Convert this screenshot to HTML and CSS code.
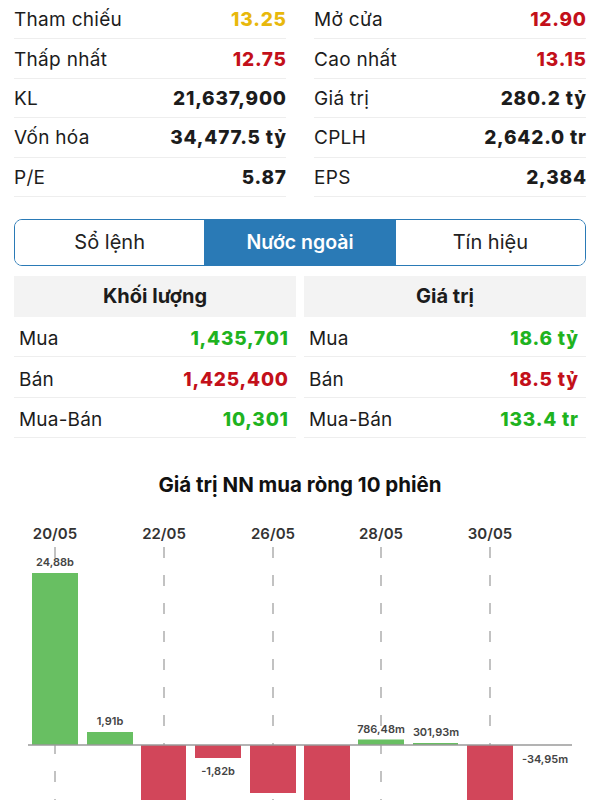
FILE: index.html
```html
<!DOCTYPE html>
<html lang="vi">
<head>
    <meta charset="UTF-8">
    <meta name="viewport" content="width=device-width, initial-scale=1.0">
    <title>Nước ngoài</title>
    <link rel="stylesheet" href="styles.css">
</head>
<body>

<div class="stats">
    <div class="stat-row"><span>Tham chiếu</span><b class="ref">13.25</b></div>
    <div class="stat-row"><span>Mở cửa</span><b class="down">12.90</b></div>
    <div class="stat-row"><span>Thấp nhất</span><b class="down">12.75</b></div>
    <div class="stat-row"><span>Cao nhất</span><b class="down">13.15</b></div>
    <div class="stat-row"><span>KL</span><b>21,637,900</b></div>
    <div class="stat-row"><span>Giá trị</span><b>280.2 tỷ</b></div>
    <div class="stat-row"><span>Vốn hóa</span><b>34,477.5 tỷ</b></div>
    <div class="stat-row"><span>CPLH</span><b>2,642.0 tr</b></div>
    <div class="stat-row"><span>P/E</span><b>5.87</b></div>
    <div class="stat-row"><span>EPS</span><b>2,384</b></div>
</div>

<div class="tabs">
    <button class="tab">Sổ lệnh</button>
    <button class="tab active">Nước ngoài</button>
    <button class="tab">Tín hiệu</button>
</div>

<div class="foreign">
    <div class="ftable">
        <div class="fhead">Khối lượng</div>
        <div class="frow"><span>Mua</span><b class="up">1,435,701</b></div>
        <div class="frow"><span>Bán</span><b class="down">1,425,400</b></div>
        <div class="frow"><span>Mua-Bán</span><b class="up">10,301</b></div>
    </div>
    <div class="ftable">
        <div class="fhead">Giá trị</div>
        <div class="frow"><span>Mua</span><b class="up">18.6 tỷ</b></div>
        <div class="frow"><span>Bán</span><b class="down">18.5 tỷ</b></div>
        <div class="frow"><span>Mua-Bán</span><b class="up">133.4 tr</b></div>
    </div>
</div>

<h3 class="chart-title">Giá trị NN mua ròng 10 phiên</h3>

<svg class="chart" width="600" height="300" viewBox="0 0 600 300">
    <!-- date labels -->
    <g class="date">
        <text x="55" y="38">20/05</text>
        <text x="164" y="38">22/05</text>
        <text x="273" y="38">26/05</text>
        <text x="381" y="38">28/05</text>
        <text x="490" y="38">30/05</text>
    </g>
    <!-- grid lines -->
    <g class="grid">
        <line x1="55" y1="46" x2="55" y2="300"/>
        <line x1="164" y1="46" x2="164" y2="300"/>
        <line x1="273" y1="46" x2="273" y2="300"/>
        <line x1="381" y1="46" x2="381" y2="300"/>
        <line x1="490" y1="46" x2="490" y2="300"/>
    </g>
    <!-- bars -->
    <rect class="bar-up" x="32" y="72" width="46" height="172"/>
    <rect class="bar-up" x="87" y="231" width="46" height="13"/>
    <rect class="bar-down" x="141" y="244" width="45" height="80"/>
    <rect class="bar-down" x="195" y="244" width="46" height="13"/>
    <rect class="bar-down" x="250" y="244" width="46" height="48"/>
    <rect class="bar-down" x="304" y="244" width="46" height="80"/>
    <rect class="bar-up" x="358" y="238.5" width="46" height="5.5"/>
    <rect class="bar-up" x="413" y="242" width="45" height="2"/>
    <rect class="bar-down" x="467" y="244" width="46" height="80"/>
    <line class="axis" x1="28" y1="244" x2="572" y2="244"/>
    <!-- values -->
    <g class="val">
        <text x="55" y="65">24,88b</text>
        <text x="110" y="224">1,91b</text>
        <text x="218" y="274">-1,82b</text>
        <text x="381" y="232">786,48m</text>
        <text x="436" y="235">301,93m</text>
        <text x="545" y="262">-34,95m</text>
    </g>
</svg>

</body>
</html>
```

FILE: styles.css
```css
body {
    font-family: Inter, "Noto Sans", sans-serif;
    margin: 0;
    padding: 0 14px;
    color: #1c1c1c;
    background: #fff;
}
b {
    font-weight: 800;
    letter-spacing: 0.8px;
    margin-right: -0.8px;
}
.up {
    color: #1fb31f;
}
.down {
    color: #c3101a;
}
.ref {
    color: #e8b80c;
}
.stats {
    display: grid;
    grid-template-columns: 1fr 1fr;
    column-gap: 28px;
}
.stat-row {
    display: flex;
    justify-content: space-between;
    align-items: center;
    box-sizing: border-box;
    height: 39.4px;
    padding-top: 1px;
    border-bottom: 1px solid #eeeeee;
    font-size: 19px;
    letter-spacing: 0.3px;
}
.tabs {
    display: flex;
    margin-top: 22px;
    height: 47px;
    box-sizing: border-box;
    border: 1.5px solid #2a7ab6;
    border-radius: 8px;
    overflow: hidden;
}
.tab {
    flex: 1;
    border: none;
    background: #fff;
    font-family: inherit;
    font-size: 20px;
    color: #222;
    padding: 0;
}
.tab + .tab {
    border-left: 1.5px solid #2a7ab6;
}
.tab.active {
    background: #2a7ab6;
    color: #fff;
    font-weight: 600;
    font-size: 19.5px;
}
.foreign {
    display: grid;
    grid-template-columns: 1fr 1fr;
    column-gap: 8px;
    margin-top: 10px;
}
.fhead {
    background: #f3f3f3;
    height: 41px;
    display: flex;
    align-items: center;
    justify-content: center;
    font-size: 20px;
    font-weight: 700;
}
.frow {
    display: flex;
    justify-content: space-between;
    align-items: center;
    box-sizing: border-box;
    height: 40.4px;
    padding: 4px 8px 0 5px;
    border-bottom: 1px solid #eeeeee;
    font-size: 19px;
    letter-spacing: 0.2px;
}
.chart-title {
    margin: 36px 0 5px;
    text-align: center;
    font-size: 20.5px;
    line-height: 22px;
    font-weight: 700;
    color: #111;
}
.chart {
    display: block;
    margin: 0 -14px;
}
.chart .date text {
    font-size: 15px;
    font-weight: 600;
    fill: #333;
    text-anchor: middle;
}
.chart .grid line {
    stroke: #c2c2c2;
    stroke-width: 2;
    stroke-dasharray: 11 17;
}
.chart .axis {
    stroke: #9a9a9a;
    stroke-width: 1.5;
}
.bar-up {
    fill: #68bf62;
}
.bar-down {
    fill: #d2465a;
}
.chart .val text {
    font-size: 11px;
    font-weight: 600;
    fill: #444;
    text-anchor: middle;
}
```
